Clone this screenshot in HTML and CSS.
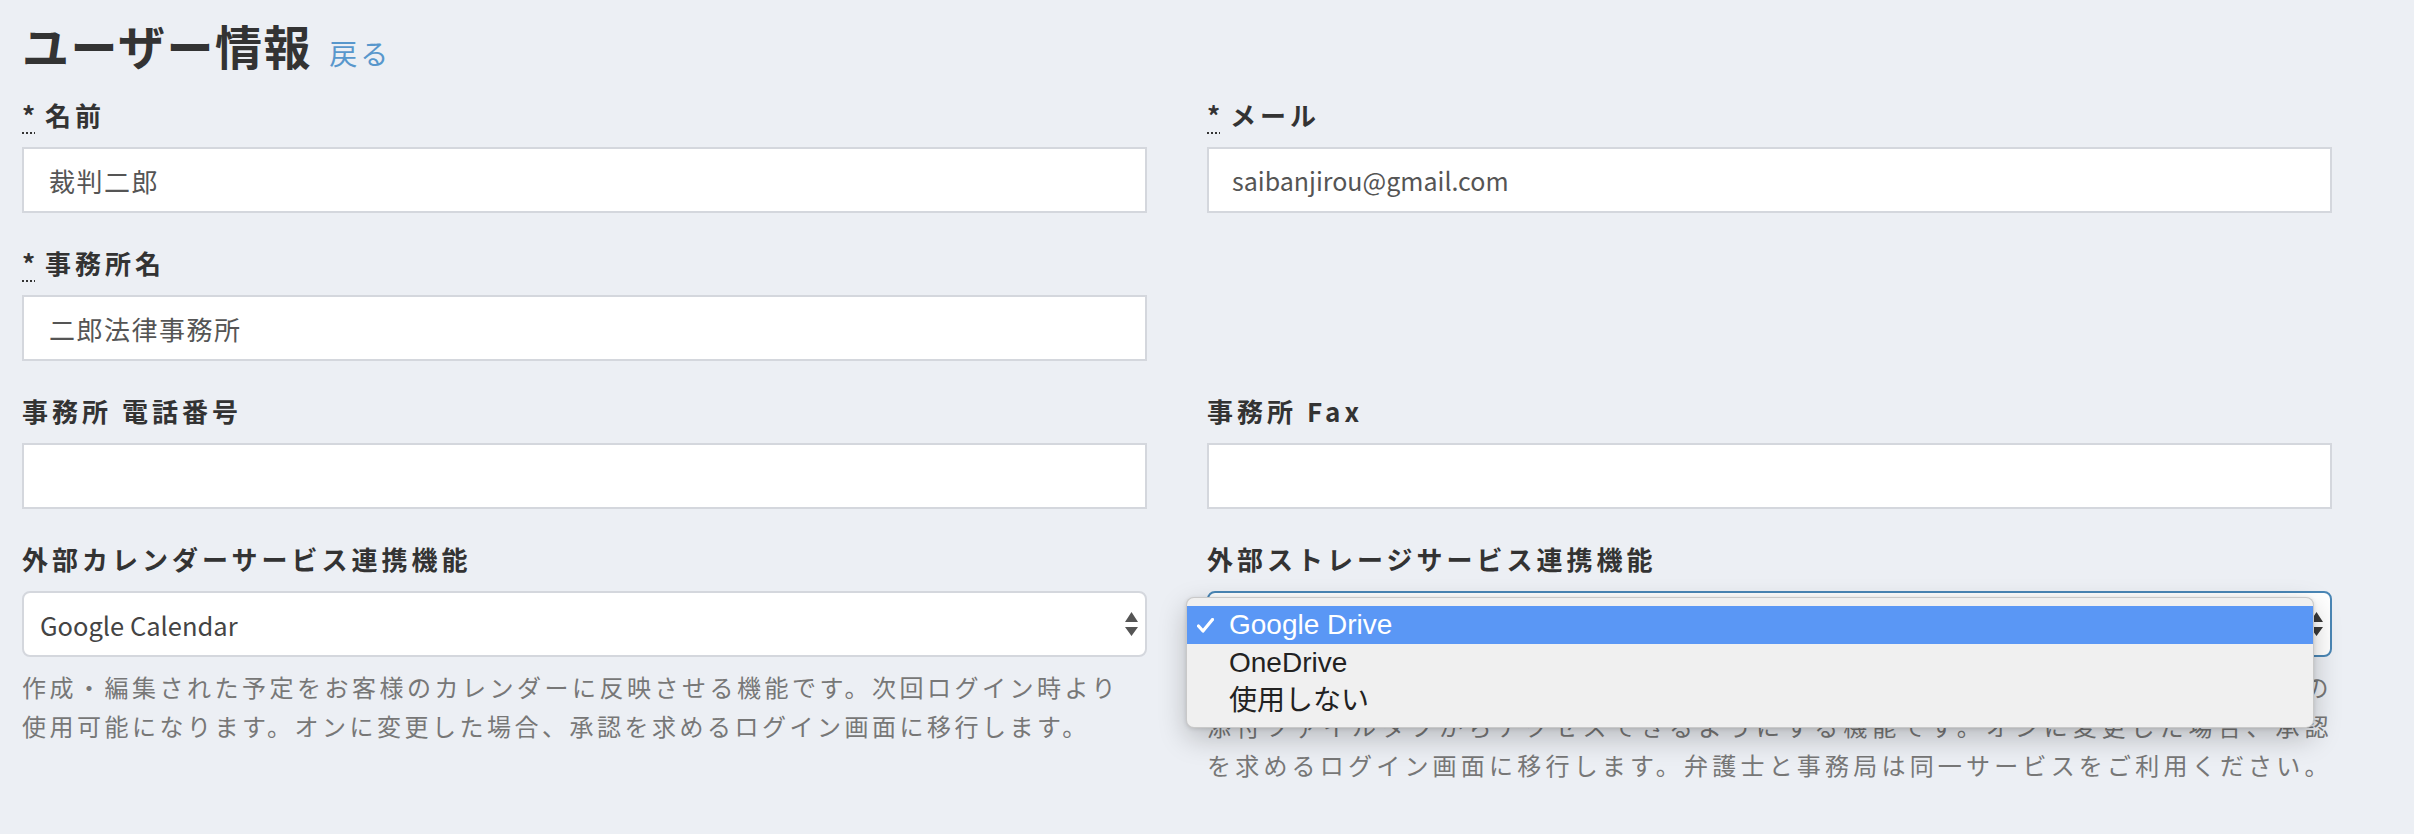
FILE: index.html
```html
<!DOCTYPE html>
<html lang="ja">
<head>
<meta charset="utf-8">
<title>ユーザー情報</title>
<link rel="stylesheet" href="styles.css">
</head>
<body>
<main class="page">
  <h1 class="page-title">ユーザー情報 <a class="back-link" href="#">戻る</a></h1>
  <form class="user-form">
    <div class="field">
      <label class="field-label"><abbr class="req" title="必須">*</abbr> 名前</label>
      <input class="text-input" type="text" value="裁判二郎">
    </div>
    <div class="field">
      <label class="field-label"><abbr class="req" title="必須">*</abbr> メール</label>
      <input class="text-input is-latin" type="text" value="saibanjirou@gmail.com">
    </div>
    <div class="field">
      <label class="field-label"><abbr class="req" title="必須">*</abbr> 事務所名</label>
      <input class="text-input" type="text" value="二郎法律事務所">
    </div>
    <div class="field"></div>
    <div class="field">
      <label class="field-label">事務所 電話番号</label>
      <input class="text-input" type="text" value="">
    </div>
    <div class="field">
      <label class="field-label">事務所 Fax</label>
      <input class="text-input" type="text" value="">
    </div>
    <div class="field">
      <label class="field-label">外部カレンダーサービス連携機能</label>
      <div class="select-wrap">
        <select class="select-input">
          <option selected>Google Calendar</option>
          <option>使用しない</option>
        </select>
        <svg class="select-arrows" width="13" height="24" viewBox="0 0 13 24"><path d="M0 10 L6.5 0 L13 10 Z M0 15 L13 15 L6.5 24 Z"/></svg>
      </div>
      <p class="help help-natural">作成・編集された予定をお客様のカレンダーに反映させる機能です。次回ログイン時より使用可能になります。オンに変更した場合、承認を求めるログイン画面に移行します。</p>
    </div>
    <div class="field">
      <label class="field-label">外部ストレージサービス連携機能</label>
      <div class="select-wrap">
        <select class="select-input is-open">
          <option selected>Google Drive</option>
          <option>OneDrive</option>
          <option>使用しない</option>
        </select>
        <svg class="select-arrows dark" width="13" height="24" viewBox="0 0 13 24"><path d="M0 10 L6.5 0 L13 10 Z M0 15 L13 15 L6.5 24 Z"/></svg>
        <ul class="select-menu">
          <li class="menu-item selected"><svg class="check" width="17" height="15" viewBox="0 0 17 15"><path d="M1.5 8 L6 13 L15.5 1.5" fill="none" stroke="#fff" stroke-width="3.2" stroke-linecap="round" stroke-linejoin="round"/></svg>Google Drive</li>
          <li class="menu-item">OneDrive</li>
          <li class="menu-item">使用しない</li>
        </ul>
      </div>
      <p class="help help-justify">事件記録としてアップロードしたファイルを外部ストレージサービスに保存し、各案件の<br>添付ファイルタブからアクセスできるようにする機能です。オンに変更した場合、承認<br>を求めるログイン画面に移行します。弁護士と事務局は同一サービスをご利用ください。</p>
    </div>
  </form>
</main>
</body>
</html>
```

FILE: styles.css
```css
html, body {
  margin: 0;
  padding: 0;
}

body {
  background: #eceff4;
  font-family: "Noto Sans CJK JP", "Noto Sans", sans-serif;
  color: #333;
  min-height: 100vh;
}

.page {
  padding: 17px 82px 0 22px;
}

.page-title {
  margin: 0 0 24px;
  font-size: 47px;
  line-height: 56px;
  font-weight: 700;
  letter-spacing: 1.5px;
  color: #333;
}

.back-link {
  margin-left: 5px;
  font-size: 28px;
  line-height: 1;
  font-weight: 400;
  letter-spacing: 3px;
  color: #5897cc;
  text-decoration: none;
}

.user-form {
  display: grid;
  grid-template-columns: 1fr 1fr;
  column-gap: 60px;
  row-gap: 32px;
}

.field-label {
  display: block;
  margin-bottom: 14px;
  font-size: 26px;
  line-height: 36px;
  font-weight: 700;
  letter-spacing: 4px;
  color: #333;
}

.req {
  letter-spacing: 0;
  text-decoration: underline dotted 2px;
  text-underline-offset: 6px;
  cursor: help;
}

.text-input {
  display: block;
  box-sizing: border-box;
  width: 100%;
  height: 66px;
  margin: 0;
  padding: 0 22px 0 25px;
  border: 2px solid #d4d7dd;
  border-radius: 0;
  background: #fff;
  font-family: inherit;
  font-size: 26px;
  letter-spacing: 1.5px;
  color: #555;
  outline: none;
}

.text-input.is-latin {
  padding-left: 23px;
  font-size: 25px;
  letter-spacing: 0;
}

.select-wrap {
  position: relative;
}

.select-input {
  display: block;
  box-sizing: border-box;
  width: 100%;
  height: 66px;
  margin: 0;
  padding: 0 16px;
  border: 2px solid #d4d7dd;
  border-radius: 8px;
  background: #fff;
  font-family: inherit;
  font-size: 25.5px;
  letter-spacing: 0;
  color: #444;
  appearance: none;
  -webkit-appearance: none;
  outline: none;
}

.select-input.is-open {
  border-color: #4a86b5;
}

.select-arrows {
  position: absolute;
  right: 9px;
  top: 21px;
  fill: #555;
  pointer-events: none;
}

.select-arrows.dark {
  fill: #3a3a3a;
}

.select-menu {
  position: absolute;
  left: -21px;
  top: 6px;
  z-index: 10;
  box-sizing: border-box;
  width: 1128px;
  margin: 0;
  padding: 8px 0 7px;
  list-style: none;
  background: #f0f0f0;
  border: 1px solid rgba(0, 0, 0, 0.16);
  border-radius: 8px;
  box-shadow: 0 10px 28px rgba(0, 0, 0, 0.22), 0 1px 4px rgba(0, 0, 0, 0.12);
}

.menu-item {
  position: relative;
  height: 38px;
  padding-left: 42px;
  font-family: "Liberation Sans", "Noto Sans CJK JP", sans-serif;
  font-size: 28px;
  line-height: 38px;
  color: #222;
}

.menu-item.selected {
  background: #5a97f5;
  color: #fff;
}

.check {
  position: absolute;
  left: 10px;
  top: 12px;
}

.help {
  margin: 10px 0 0;
  font-size: 24px;
  line-height: 39px;
  letter-spacing: 3.5px;
  color: #777;
}

.help-natural {
  padding-right: 16px;
}

.help-justify {
  text-align: justify;
  text-align-last: justify;
}
```
